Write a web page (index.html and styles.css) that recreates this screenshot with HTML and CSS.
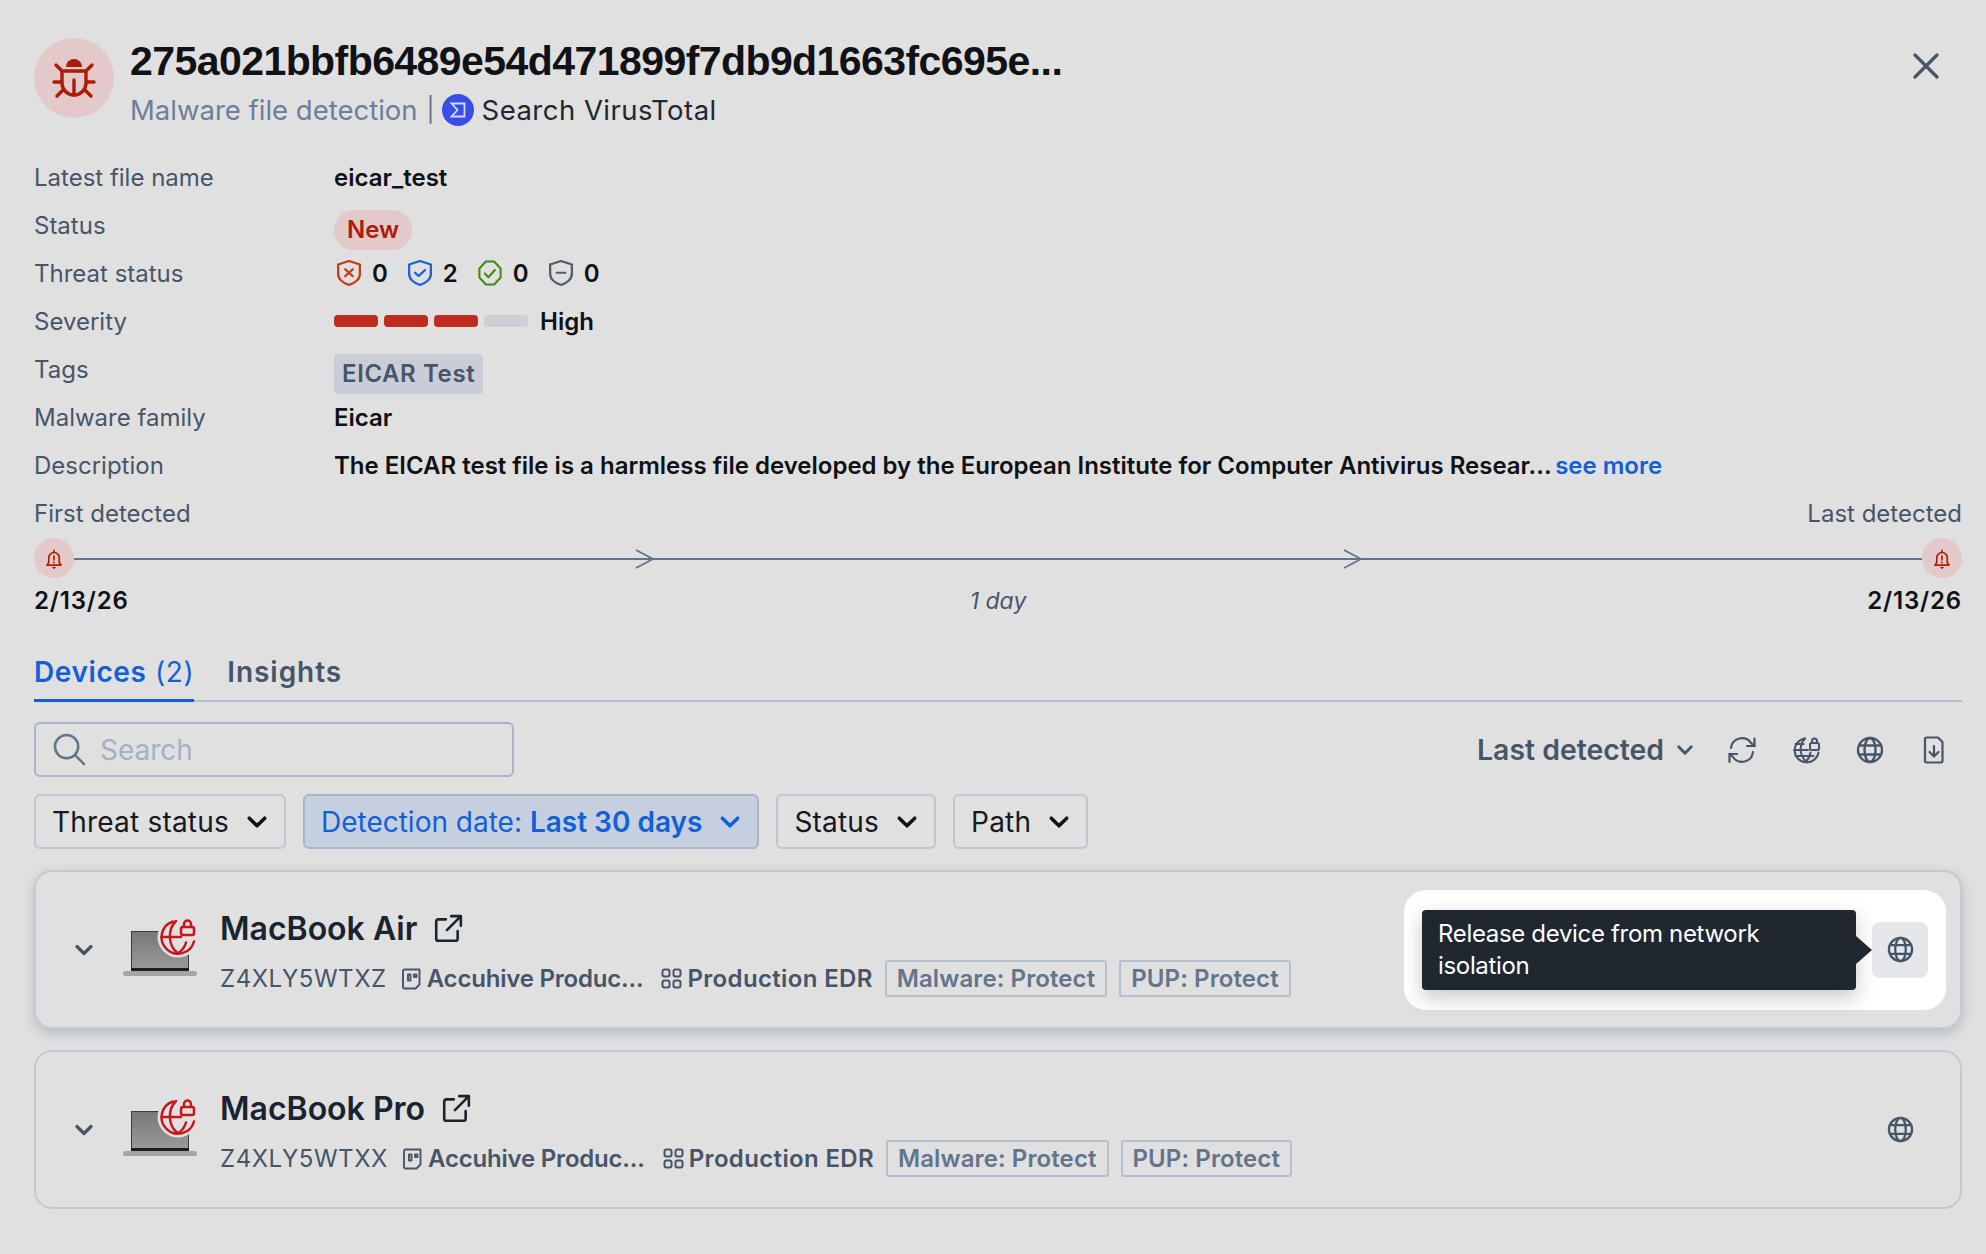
FILE: index.html
```html
<!DOCTYPE html>
<html lang="en">
<head>
<meta charset="utf-8">
<title>Malware file detection</title>
<link rel="stylesheet" href="styles.css">
</head>
<body>
<svg class="defs" width="0" height="0" aria-hidden="true">
  <defs>
    <symbol id="globe" viewBox="0 0 28 28"><g fill="none" stroke="currentColor" stroke-width="2.400"><circle cx="14" cy="14" r="12"/><ellipse cx="14" cy="14" rx="5.500" ry="12"/><path d="M3 9.500h22M3 18.500h22"/></g></symbol>
    <symbol id="ext" viewBox="0 0 28 28"><g fill="none" stroke="currentColor" stroke-width="2.400" stroke-linecap="round" stroke-linejoin="round"><path d="M12 5H5a2 2 0 0 0-2 2v16a2 2 0 0 0 2 2h16a2 2 0 0 0 2-2v-7"/><path d="M13 15 26 2M17 2h9v9"/></g></symbol>
    <symbol id="chev" viewBox="0 0 20 20"><path d="M3 6.500 10 13.500 17 6.500" fill="none" stroke="currentColor" stroke-width="3.200" stroke-linecap="round" stroke-linejoin="round"/></symbol>
    <symbol id="bell" viewBox="0 0 20 24"><g fill="none" stroke="#ad1c06" stroke-width="1.900" stroke-linejoin="round" stroke-linecap="round"><path d="M2 18.500h16l-2-3V10a6 6 0 0 0-12 0v5.500z"/><path d="M10 1.500v2.500M10 8v4.500"/></g><circle cx="10" cy="15.400" r="1.100" fill="#ad1c06"/><path d="M7.500 20.500h5L10 23z" fill="#ad1c06"/></symbol>
    <symbol id="arrow" viewBox="0 0 20 20"><path d="M1 1 18 10 1 19" fill="none" stroke="#64748b" stroke-width="1.800"/></symbol>
    <symbol id="doc" viewBox="0 0 20 22"><g fill="none" stroke="currentColor" stroke-width="1.900" stroke-linejoin="round"><path d="M2.500 1.500h15v15l-4 4h-11a1.500 1.500 0 0 1-1.500-1.500V3a1.500 1.500 0 0 1 1.500-1.500z"/><path d="M6 6.500h2.500v6H6zM12 6.500h2.500v2.500H12z"/></g></symbol>
    <symbol id="grid" viewBox="0 0 21 21"><g fill="none" stroke="currentColor" stroke-width="2"><rect x="1.500" y="1.500" width="7" height="7" rx="2"/><rect x="12.500" y="1.500" width="7" height="7" rx="2"/><rect x="1.500" y="12.500" width="7" height="7" rx="2"/><rect x="12.500" y="12.500" width="7" height="7" rx="2"/></g></symbol>
    <symbol id="device" viewBox="0 0 74 58">
      <path d="M8 12h58v39H8z" fill="url(#screen)"/>
      <path d="M8 12h32v1H9v38H8z" fill="#3b3b3b"/>
      <path d="M65 36h1v15h-1z" fill="#3b3b3b"/>
      <rect x="8" y="49" width="58" height="3" fill="#1c1c1c"/>
      <rect x="0" y="52" width="74" height="5" rx="2.500" fill="#a4a4a4"/>
      <circle cx="55" cy="18" r="20.500" fill="#e0e0e0"/>
      <g fill="none" stroke="#c9161d" stroke-width="2.500" stroke-linecap="round" stroke-linejoin="round">
        <path d="M50 2.500a16.500 16.500 0 1 0 21 20"/>
        <path d="M53 2c-8 8-9 24 2 32.500 4-3 7-7 8-11"/>
        <path d="M38.500 18H58"/>
        <rect x="58" y="8" width="13" height="8" rx="2"/>
        <path d="M61 8V5a3.500 3.500 0 0 1 7 0v3"/>
      </g>
    </symbol>
    <linearGradient id="screen" x1="0" y1="0" x2="0" y2="1"><stop offset="0" stop-color="#777"/><stop offset="1" stop-color="#9a9a9a"/></linearGradient>
  </defs>
</svg>

<main class="panel">
  <header class="head">
    <div class="avatar">
      <svg class="bug" viewBox="0 0 44 44" fill="none" stroke="#ad1c06" stroke-width="3.400" stroke-linecap="round">
        <path d="M14 11a8 8 0 0 1 16 0z" fill="#ad1c06" stroke="none"/>
        <path d="M12 15h20a2 2 0 0 1 2 2v10a12 12 0 0 1-24 0V17a2 2 0 0 1 2-2z"/>
        <path d="M22 24v15M10 15 4 9M34 15l6-6M9 26H2M35 26h7M11 34l-6 6M33 34l6 6"/>
      </svg>
    </div>
    <div class="head-text">
      <h1 class="title">275a021bbfb6489e54d471899f7db9d1663fc695e...</h1>
      <div class="subtitle"><span class="muted">Malware file detection</span><span class="pipe">|</span>
        <svg class="vt" viewBox="0 0 32 32"><circle cx="16" cy="16" r="16" fill="#394ee8"/><path d="M9.500 9.500h13v13h-13L15.500 16z" fill="none" stroke="#d5dafc" stroke-width="1.800"/></svg>
        <span class="vt-link">Search VirusTotal</span></div>
    </div>
    <svg class="close" viewBox="0 0 26 26"><path d="M2 2 24 24M24 2 2 24" stroke="#475569" stroke-width="3.200" stroke-linecap="round"/></svg>
  </header>

  <dl class="facts">
    <dt>Latest file name</dt><dd class="strong">eicar_test</dd>
    <dt>Status</dt><dd><span class="pill">New</span></dd>
    <dt>Threat status</dt>
    <dd class="threats">
      <span class="threat"><svg viewBox="1 1 22 26.500" preserveAspectRatio="none" fill="none" stroke="#c93a16" stroke-width="2.200" stroke-linejoin="round"><path d="M12 2 22 5.500V15c0 6-5 9.500-10 11.500C7 24.500 2 21 2 15V5.500z"/><path d="m8.500 10.500 7 7M15.500 10.500l-7 7" stroke-linecap="round"/></svg>0</span>
      <span class="threat"><svg viewBox="1 1 22 26.500" preserveAspectRatio="none" fill="none" stroke="#1c63d8" stroke-width="2.200" stroke-linejoin="round"><path d="M12 2 22 5.500V15c0 6-5 9.500-10 11.500C7 24.500 2 21 2 15V5.500z"/><path d="m7.500 14 3.200 3.200 6-6" stroke-linecap="round"/></svg>2</span>
      <span class="threat"><svg viewBox="0 0 26 26" preserveAspectRatio="none" fill="none" stroke="#40880e" stroke-width="2.200" stroke-linejoin="round"><path d="M8.500 1.500h9l7 7v9l-7 7h-9l-7-7v-9z"/><path d="m7.500 13.500 3.800 3.800 7-7.300" stroke-linecap="round"/></svg>0</span>
      <span class="threat"><svg viewBox="1 1 22 26.500" preserveAspectRatio="none" fill="none" stroke="#4f5d6e" stroke-width="2.200" stroke-linejoin="round"><path d="M12 2 22 5.500V15c0 6-5 9.500-10 11.500C7 24.500 2 21 2 15V5.500z"/><path d="M8 14h8" stroke-linecap="round"/></svg>0</span>
    </dd>
    <dt>Severity</dt>
    <dd class="severity strong"><i class="seg on"></i><i class="seg on"></i><i class="seg on"></i><i class="seg"></i><span class="sev-label">High</span></dd>
    <dt>Tags</dt><dd><span class="tag">EICAR Test</span></dd>
    <dt>Malware family</dt><dd class="strong">Eicar</dd>
    <dt>Description</dt><dd class="strong">The EICAR test file is a harmless file developed by the European Institute for Computer Antivirus Resear... <a class="more">see more</a></dd>
  </dl>

  <section class="timeline">
    <div class="tl-labels"><span>First detected</span><span>Last detected</span></div>
    <div class="tl-track">
      <span class="node"><svg class="bell"><use href="#bell"/></svg></span>
      <span class="line first"></span><svg class="tl-arrow"><use href="#arrow"/></svg>
      <span class="line mid"></span><svg class="tl-arrow"><use href="#arrow"/></svg>
      <span class="line last"></span>
      <span class="node"><svg class="bell"><use href="#bell"/></svg></span>
    </div>
    <div class="tl-dates"><b>2/13/26</b><em>1 day</em><b>2/13/26</b></div>
  </section>

  <nav class="tabs"><span class="tab active"><b>Devices</b> (2)</span><span class="tab">Insights</span></nav>

  <div class="toolbar">
    <label class="search">
      <svg class="search-icon" viewBox="0 0 34 34" fill="none" stroke="#64748b" stroke-width="2.600" stroke-linecap="round"><circle cx="14" cy="14" r="12"/><path d="m23 23 9 9"/></svg>
      <span>Search</span>
    </label>
    <div class="tools">
      <span class="sort">Last detected<svg class="sort-chev"><use href="#chev"/></svg></span>
      <svg class="tool" viewBox="0 0 28 28" fill="none" stroke="currentColor" stroke-width="2.200" stroke-linecap="round" stroke-linejoin="round"><path d="M3 12A11 11 0 0 1 23 7l3.500 3V2.500M25 16A11 11 0 0 1 5 21l-3.500-3v8"/><path d="M26.500 10H19M1.500 18H9"/></svg>
      <svg class="tool" viewBox="0 0 28 28" fill="none" stroke="currentColor" stroke-width="2" stroke-linecap="round" stroke-linejoin="round"><path d="M13 2.500a12 12 0 1 0 13.500 14"/><path d="M13 2.500c-6 6.500-6 16 1 23 3-3 4-6 4.500-9"/><path d="M2 14h14M3.500 8h8M3.500 20h18"/><rect x="18" y="7" width="9" height="7" rx="1.500"/><path d="M20 7V5a2.500 2.500 0 0 1 5 0v2"/></svg>
      <svg class="tool"><use href="#globe"/></svg>
      <svg class="tool" viewBox="0 0 28 28" fill="none" stroke="currentColor" stroke-width="2.200" stroke-linecap="round" stroke-linejoin="round"><path d="M6.500 1.500H18l4.500 4.500v19a1.500 1.500 0 0 1-1.500 1.500H6.500A1.500 1.500 0 0 1 5 25V3a1.500 1.500 0 0 1 1.500-1.500z"/><path d="M14 10v10M9.500 16l4.500 4.500 4.500-4.500"/></svg>
    </div>
  </div>

  <div class="filters">
    <span class="filter">Threat status<svg class="f-chev"><use href="#chev"/></svg></span>
    <span class="filter on">Detection date: <b>Last 30 days</b><svg class="f-chev"><use href="#chev"/></svg></span>
    <span class="filter">Status<svg class="f-chev"><use href="#chev"/></svg></span>
    <span class="filter">Path<svg class="f-chev"><use href="#chev"/></svg></span>
  </div>

  <article class="card raised">
    <svg class="card-chev"><use href="#chev"/></svg>
    <svg class="device"><use href="#device"/></svg>
    <div class="card-body">
      <div class="name">MacBook Air<svg class="ext"><use href="#ext"/></svg></div>
      <div class="meta"><span class="serial">Z4XLY5WTXZ</span>
        <span class="item"><svg class="i-doc"><use href="#doc"/></svg><b class="acc">Accuhive Produc...</b></span>
        <span class="item gap"><svg class="i-grid"><use href="#grid"/></svg><b class="prod">Production EDR</b></span>
        <span class="badge">Malware: Protect</span><span class="badge">PUP: Protect</span></div>
    </div>
    <div class="hover">
      <div class="tip">Release device from network isolation</div>
      <span class="iso active"><svg class="globe"><use href="#globe"/></svg></span>
    </div>
  </article>

  <article class="card">
    <svg class="card-chev"><use href="#chev"/></svg>
    <svg class="device"><use href="#device"/></svg>
    <div class="card-body">
      <div class="name">MacBook Pro<svg class="ext"><use href="#ext"/></svg></div>
      <div class="meta"><span class="serial">Z4XLY5WTXX</span>
        <span class="item"><svg class="i-doc"><use href="#doc"/></svg><b class="acc">Accuhive Produc...</b></span>
        <span class="item gap"><svg class="i-grid"><use href="#grid"/></svg><b class="prod">Production EDR</b></span>
        <span class="badge">Malware: Protect</span><span class="badge">PUP: Protect</span></div>
    </div>
    <div class="plain"><span class="iso"><svg class="globe"><use href="#globe"/></svg></span></div>
  </article>
</main>
</body>
</html>
```

FILE: styles.css
```css
* { box-sizing: border-box; }
html, body { margin: 0; height: 100%; }
body { background: #e0e0e0; font-family: Inter, "Liberation Sans", sans-serif; font-size: 24px; color: #0f1114; overflow: hidden; }
.defs { position: absolute; }
.panel { padding: 38px 24px 0 34px; }

.head { display: flex; align-items: flex-start; height: 80px; }
.avatar { width: 80px; height: 80px; border-radius: 50%; background: #e3c9c9; display: flex; align-items: center; justify-content: center; flex: none; }
.bug { width: 44px; height: 44px; }
.head-text { margin-left: 16px; flex: 1; }
.title { margin: 0; font-family: "Liberation Sans", sans-serif; font-size: 41px; line-height: 46px; font-weight: 700; letter-spacing: -0.57px; color: #101215; white-space: nowrap; }
.subtitle { display: flex; align-items: center; font-size: 27.500px; line-height: 36px; margin-top: 8px; }
.muted { color: #6c7f9a; }
.pipe { color: #64748b; margin: 0 7px 0 9px; font-size: 24px; }
.vt { width: 32px; height: 32px; margin-right: 8px; }
.vt-link { color: #1f2733; letter-spacing: .48px; }
.close { width: 26px; height: 26px; margin: 15px 23px 0 0; }

.facts { display: grid; grid-template-columns: 300px 1fr; grid-auto-rows: 48px; margin: 35px 0 0; align-items: center; }
.facts dt { color: #475569; }
.facts dd { margin: 0; display: flex; align-items: center; white-space: pre; }
.strong { font-weight: 600; }
.pill { background: #e3c9c9; color: #ad1c06; font-weight: 600; padding: 0 13px; height: 40px; line-height: 40px; border-radius: 20px; transform: translateY(5px); }
.threats { gap: 20px; font-weight: 600; padding-left: 3px; }
.threat { display: flex; align-items: center; gap: 11px; }
.threat svg { width: 24px; height: 26px; }
.severity { gap: 6px; }
.seg { width: 44px; height: 12px; border-radius: 4px; background: #cdd0d7; }
.seg.on { background: #c02b20; }
.sev-label { margin-left: 6px; }
.tag { background: #c8cdd7; color: #475569; font-weight: 600; padding: 0 8px; height: 40px; line-height: 40px; border-radius: 4px; transform: translateY(5px); letter-spacing: .6px; }
.more { color: #1160d6; font-weight: 600; margin-left: -2px; }

.timeline { margin-top: 1px; }
.tl-labels { display: flex; justify-content: space-between; height: 48px; line-height: 48px; color: #475569; }
.tl-track { display: flex; align-items: center; height: 40px; }
.node { width: 40px; height: 40px; border-radius: 50%; background: #e3c9c9; display: flex; align-items: center; justify-content: center; flex: none; }
.bell { width: 18px; height: 21px; margin-top: 2px; }
.line { height: 2px; background: #64748b; margin-top: 2px; }
.line.first { flex: 564; }
.line.mid { flex: 708; }
.line.last { flex: 576; }
.tl-arrow { width: 20px; height: 20px; margin: 2px -17px 0 -3px; position: relative; }
.tl-dates { display: grid; grid-template-columns: 1fr auto 1fr; margin-top: 5px; line-height: 36px; }
.tl-dates b { font-weight: 600; letter-spacing: .85px; }
.tl-dates b:last-child { text-align: right; }
.tl-dates em { color: #475569; font-size: 23px; line-height: 36px; }

.tabs { display: flex; gap: 33px; margin-top: 30px; border-bottom: 2px solid #b0bdd0; height: 53px; font-size: 28px; }
.tab { color: #475569; font-weight: 600; line-height: 46px; letter-spacing: .95px; }
.tab.active { color: #1160d6; font-weight: 400; border-bottom: 3px solid #1160d6; height: 53px; letter-spacing: .6px; }
.tab.active b { font-weight: 600; }

.toolbar { display: flex; align-items: center; justify-content: space-between; margin-top: 20px; }
.search { width: 480px; height: 55px; border: 2px solid #a7b4c9; border-radius: 6px; display: flex; align-items: center; padding-left: 17px; gap: 14px; color: #a3b1c6; font-size: 28px; }
.search-icon { width: 33px; height: 33px; }
.tools { display: flex; align-items: center; color: #475569; gap: 36px; margin-right: 14px; }
.sort { display: flex; align-items: center; font-size: 28.400px; font-weight: 600; gap: 12px; margin-right: -2px; }
.sort-chev { width: 18px; height: 18px; }
.tool { width: 28px; height: 28px; }

.filters { display: flex; gap: 17px; margin-top: 17px; }
.filter { display: flex; align-items: center; height: 55px; padding: 0 16px; border: 2px solid #bcc6d4; border-radius: 6px; font-size: 28px; letter-spacing: .2px; white-space: pre; color: #15191e; }
.filter .f-chev { width: 22px; height: 22px; margin-left: 17px; color: #0f1114; }
.filter.on { background: #c5cfe0; border-color: #a7b4c9; color: #1160d6; letter-spacing: 0; }
.filter.on b { font-weight: 600; }
.filter.on .f-chev { color: #1160d6; }

.card { display: flex; align-items: center; height: 159px; margin-top: 21px; border: 2px solid #c0cbda; border-radius: 18px; padding-left: 38px; padding-right: 14px; }
.card.raised { box-shadow: 0 4px 12px rgba(70, 85, 110, .28); }
.card-chev { width: 20px; height: 20px; color: #475569; flex: none; }
.device { width: 74px; height: 58px; margin: -4px 0 0 29px; flex: none; }
.card-body { margin-left: 23px; flex: 1; padding-top: 7px; }
.name { display: flex; align-items: center; font-size: 32px; font-weight: 600; color: #1a2430; line-height: 40px; }
.ext { width: 30px; height: 30px; margin-left: 16px; }
.meta { display: flex; align-items: center; margin-top: 11px; line-height: 36px; color: #475569; }
.serial { margin-right: 15px; letter-spacing: .55px; }
.item { display: flex; align-items: center; gap: 5px; white-space: nowrap; }
.item b { font-weight: 600; }
.acc { letter-spacing: -.2px; }
.prod { letter-spacing: .35px; }
.item.gap { margin-left: 18px; }
.i-doc { width: 20px; height: 22px; }
.i-grid { width: 21px; height: 21px; }
.badge { border: 2px solid #b4bfcf; border-radius: 3px; color: #64748b; font-weight: 600; height: 37px; line-height: 33px; padding: 0 10px; margin-left: 12px; letter-spacing: .1px; white-space: nowrap; }
.hover { width: 542px; height: 120px; background: #fff; border-radius: 22px; display: flex; align-items: center; padding-left: 18px; flex: none; }
.tip { position: relative; width: 434px; height: 80px; background: #1f2731; color: #fff; border-radius: 4px; padding: 0 16px; line-height: 32px; letter-spacing: -.33px; display: flex; align-items: center; box-shadow: 0 8px 20px rgba(30, 40, 55, .25); }
.tip::after { content: ""; position: absolute; right: -16px; top: 26px; border-left: 16px solid #1f2731; border-top: 14px solid transparent; border-bottom: 14px solid transparent; }
.iso { width: 56px; height: 56px; display: flex; align-items: center; justify-content: center; color: #475569; margin-left: 16px; border-radius: 8px; flex: none; }
.iso.active { background: #e5e7ea; }
.plain { width: 542px; display: flex; justify-content: flex-end; padding-right: 18px; flex: none; }
.globe { width: 27px; height: 27px; }
```
